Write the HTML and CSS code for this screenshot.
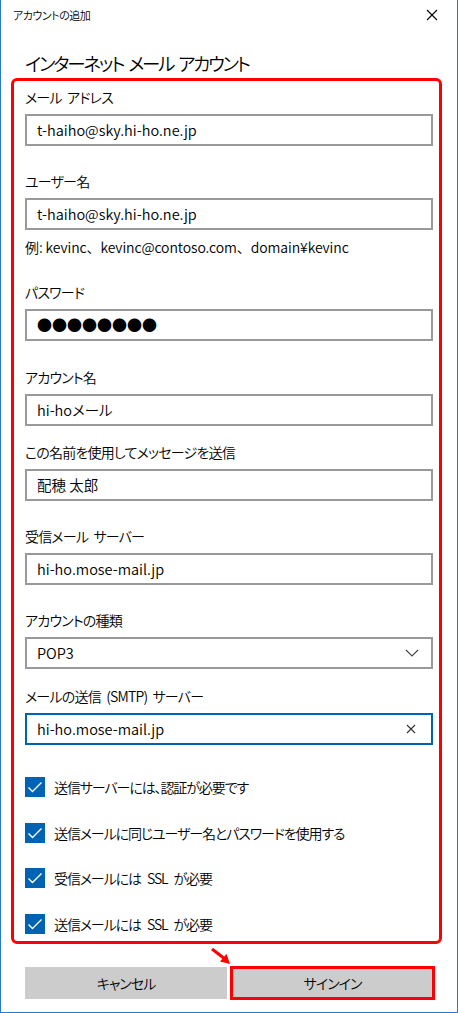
FILE: index.html
```html
<!DOCTYPE html>
<html lang="ja">
<head>
<meta charset="utf-8">
<title>アカウントの追加</title>
<link rel="stylesheet" href="styles.css">
</head>
<body>
<div class="window">
  <div class="titlebar">
    <span class="title">アカウントの追加</span>
    <svg class="close" width="12" height="12" viewBox="0 0 12 12"><path d="M1 1L11 11M11 1L1 11" stroke="#000" stroke-width="1.1" fill="none"/></svg>
  </div>
  <h1 class="heading">インターネット メール アカウント</h1>
  <div class="form">
    <div class="field f1">
      <div class="label">メール アドレス</div>
      <div class="input">t-haiho@sky.hi-ho.ne.jp</div>
    </div>
    <div class="field f2">
      <div class="label">ユーザー名</div>
      <div class="input">t-haiho@sky.hi-ho.ne.jp</div>
      <div class="hint">例: kevinc、kevinc@contoso.com、domain¥kevinc</div>
    </div>
    <div class="field f3">
      <div class="label">パスワード</div>
      <div class="input pw">●●●●●●●●</div>
    </div>
    <div class="field f4">
      <div class="label">アカウント名</div>
      <div class="input">hi-hoメール</div>
    </div>
    <div class="field f5">
      <div class="label">この名前を使用してメッセージを送信</div>
      <div class="input">配穂 太郎</div>
    </div>
    <div class="field f6">
      <div class="label">受信メール サーバー</div>
      <div class="input">hi-ho.mose-mail.jp</div>
    </div>
    <div class="field f7">
      <div class="label">アカウントの種類</div>
      <div class="input select"><span>POP3</span>
        <svg width="14" height="8" viewBox="0 0 14 8"><path d="M1 1L7 7L13 1" stroke="#444" stroke-width="1.1" fill="none"/></svg>
      </div>
    </div>
    <div class="field f8">
      <div class="label">メールの送信 (SMTP) サーバー</div>
      <div class="input focus"><span>hi-ho.mose-mail.jp</span>
        <svg width="10" height="10" viewBox="0 0 10 10"><path d="M1 1L9 9M9 1L1 9" stroke="#333" stroke-width="1.1" fill="none"/></svg>
      </div>
    </div>
    <div class="checks">
      <div class="check"><span class="box"><svg width="20" height="20" viewBox="0 0 20 20"><path d="M3.5 10.5L7.5 14.5L16.5 5.5" stroke="#fff" stroke-width="1.4" fill="none"/></svg></span><span>送信サーバーには、認証が必要です</span></div>
      <div class="check"><span class="box"><svg width="20" height="20" viewBox="0 0 20 20"><path d="M3.5 10.5L7.5 14.5L16.5 5.5" stroke="#fff" stroke-width="1.4" fill="none"/></svg></span><span>送信メールに同じユーザー名とパスワードを使用する</span></div>
      <div class="check"><span class="box"><svg width="20" height="20" viewBox="0 0 20 20"><path d="M3.5 10.5L7.5 14.5L16.5 5.5" stroke="#fff" stroke-width="1.4" fill="none"/></svg></span><span>受信メールには SSL が必要</span></div>
      <div class="check"><span class="box"><svg width="20" height="20" viewBox="0 0 20 20"><path d="M3.5 10.5L7.5 14.5L16.5 5.5" stroke="#fff" stroke-width="1.4" fill="none"/></svg></span><span>送信メールには SSL が必要</span></div>
    </div>
  </div>
  <div class="buttons">
    <div class="btn cancel">キャンセル</div>
    <div class="btn signin">サインイン</div>
    <svg class="arrow" width="24" height="20" viewBox="0 0 24 20"><path d="M3 2L16 12" stroke="#f00" stroke-width="3" fill="none"/><path d="M21 17L11 14.5L17.5 7Z" fill="#f00"/></svg>
  </div>
</div>
</body>
</html>
```
FILE: styles.css
```css
* { box-sizing: border-box; }
html, body { margin: 0; padding: 0; background: #fff; }
body {
  font-family: "Noto Sans CJK JP", "Noto Sans", sans-serif;
  font-feature-settings: "palt";
  font-weight: 350;
  color: #000;
}
.window {
  width: 458px;
  height: 1013px;
  border: 1px solid #2b79c9;
  border-top: none;
  position: relative;
}
.titlebar {
  height: 30px;
  display: flex;
  align-items: center;
  justify-content: space-between;
  padding: 0 19px 0 12px;
}
.title { font-size: 11px; line-height: 30px; letter-spacing: -0.5px; }
.close { display: block; }
.heading {
  margin: 19px 0 0 24px;
  font-size: 18.5px;
  font-weight: 350;
  line-height: 28px;
  letter-spacing: -2.2px;
  word-spacing: 3px;
}
.form {
  margin: 1px 0 0 10px;
  width: 431px;
  border: 3px solid #f00;
  border-radius: 6px;
  padding: 6px 6px 7px 11px;
}
.label { font-size: 14px; line-height: 20px; margin-bottom: 7px; letter-spacing: -0.8px; word-spacing: 3px; }
.input {
  height: 32px;
  border: 2px solid #999;
  padding: 0 10px;
  font-size: 14.5px;
  line-height: 28px;
  display: flex;
  align-items: center;
  justify-content: space-between;
}
.input.pw { font-size: 15px; font-weight: 400; }
.input.select svg { margin-right: 2px; }
.input.focus { border-color: #0063b1; }
.input.focus svg { margin-right: 5px; }
.hint { font-size: 14px; line-height: 20px; margin-top: 7px; font-feature-settings: normal; letter-spacing: -0.1px; }
.f2 { margin-top: 25px; }
.f3 { margin-top: 25px; }
.f4 { margin-top: 26px; }
.f5 { margin-top: 16px; }
.f6 { margin-top: 25px; }
.f7 { margin-top: 25px; }
.f8 { margin-top: 17px; }
.checks {
  margin-top: 32px;
  display: flex;
  flex-direction: column;
  gap: 25.5px;
}
.check {
  display: flex;
  align-items: center;
  gap: 9px;
  height: 20px;
  font-size: 14px;
  letter-spacing: -1.1px;
  word-spacing: 4px;
}
.box {
  width: 20px;
  height: 20px;
  background: #0063b1;
  display: block;
}
.box svg { display: block; }
.buttons {
  position: relative;
  display: flex;
  margin: 22px 0 0 24px;
  width: 410px;
  align-items: center;
}
.btn {
  background: #ccc;
  font-size: 14px;
  letter-spacing: -1px;
  display: flex;
  align-items: center;
  justify-content: center;
}
.cancel { width: 202px; height: 32px; }
.signin {
  width: 205px;
  height: 34px;
  margin-left: 3px;
  border: 3px solid #f00;
}
.arrow {
  position: absolute;
  left: 184px;
  top: -19px;
}
```
